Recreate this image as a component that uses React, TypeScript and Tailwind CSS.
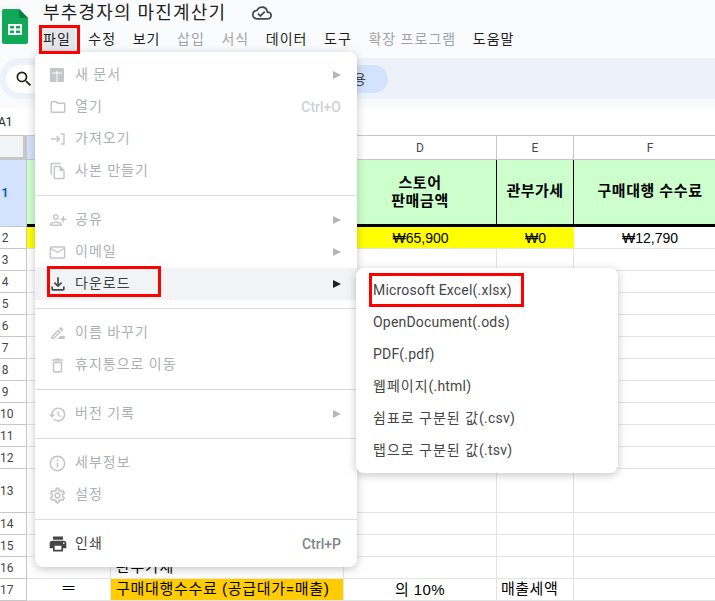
import type { ReactNode } from 'react'
import {
  MdHistory,
  MdInfoOutline,
  MdOutlineCloudDone,
  MdOutlineDeleteOutline,
  MdOutlineDriveFileRenameOutline,
  MdOutlineFileCopy,
  MdOutlineFileDownload,
  MdOutlineFolder,
  MdOutlineMailOutline,
  MdOutlineSettings,
  MdPersonAddAlt,
  MdPrint,
  MdSearch,
} from 'react-icons/md'

const fontClass = "font-['Roboto','Noto_Sans_CJK_KR',sans-serif]"

function SheetsLogo() {
  return (
    <svg width="26" height="35" viewBox="0 0 26 35" className="shrink-0">
      <path d="M2 0h15l9 9v24a2 2 0 0 1-2 2H2a2 2 0 0 1-2-2V2a2 2 0 0 1 2-2z" fill="#0fa958" />
      <path d="M17 0l9 9h-7a2 2 0 0 1-2-2z" fill="#0b7a43" />
      <path d="M6 15h14v11H6zM8 17v2.5h4V17zm6 0v2.5h4V17zm-6 4.5V24h4v-2.5zm6 0V24h4v-2.5z" fill="#fff" fillRule="evenodd" />
    </svg>
  )
}

function NewDocIcon() {
  return (
    <svg width="14" height="14" viewBox="0 0 14 14">
      <rect width="14" height="14" rx="1" fill="#c4c6c8" />
      <path d="M7 3v11M2 5h10" stroke="#fff" strokeWidth="1" fill="none" />
    </svg>
  )
}

function ImportIcon() {
  return (
    <svg width="16" height="16" viewBox="0 0 16 16" fill="none" stroke="#c4c6c8" strokeWidth="1.4">
      <path d="M1 8h8M6.5 5l3 3-3 3M11 3h3v10h-3" />
    </svg>
  )
}

function Arrow({ dark }: { dark?: boolean }) {
  return (
    <span
      className={`h-0 w-0 border-y-[4px] border-l-[8px] border-y-transparent ${dark ? 'border-l-[#202124]' : 'border-l-[#b4b6b8]'}`}
    />
  )
}

type ItemProps = {
  icon?: ReactNode
  label: string
  shortcut?: string
  arrow?: boolean
  active?: boolean
  enabled?: boolean
}

function MenuItem({ icon, label, shortcut, arrow, active, enabled }: ItemProps) {
  return (
    <div className={`flex h-8 items-center pl-[15px] pr-4 ${active ? 'bg-[#f1f3f4]' : ''}`}>
      <span className={`flex w-[25px] shrink-0 items-center ${enabled ? 'text-[#444746]' : 'text-[#c4c6c8]'}`}>{icon}</span>
      <span className={`flex-1 pb-[2px] text-sm tracking-[1px] ${enabled ? 'text-[#3c4043]' : 'text-[#aeb1b4]'}`}>{label}</span>
      {shortcut && <span className={`pb-[1px] text-sm font-medium ${enabled ? 'text-[#80868b]' : 'text-[#cfd1d3]'}`}>{shortcut}</span>}
      {arrow && <Arrow dark={active} />}
    </div>
  )
}

function Divider() {
  return <div className="my-2 h-px bg-[#dadce0]" />
}

function FileMenu() {
  return (
    <div className="absolute left-[35px] top-[52px] z-20 w-[322px] rounded-lg bg-white pt-[7px] pb-[7px] shadow-[0_2px_8px_rgba(60,64,67,0.3)]">
      <MenuItem icon={<NewDocIcon />} label="새 문서" arrow />
      <MenuItem icon={<MdOutlineFolder size={18} className="-ml-px" />} label="열기" shortcut="Ctrl+O" />
      <MenuItem icon={<ImportIcon />} label="가져오기" />
      <MenuItem icon={<MdOutlineFileCopy size={18} className="-ml-px" />} label="사본 만들기" />
      <Divider />
      <MenuItem icon={<MdPersonAddAlt size={18} className="-ml-px" />} label="공유" arrow />
      <MenuItem icon={<MdOutlineMailOutline size={19} className="-ml-[2px]" />} label="이메일" arrow />
      <MenuItem icon={<MdOutlineFileDownload size={20} className="-ml-[2px]" />} label="다운로드" arrow active enabled />
      <Divider />
      <MenuItem icon={<MdOutlineDriveFileRenameOutline size={18} className="-ml-px" />} label="이름 바꾸기" />
      <MenuItem icon={<MdOutlineDeleteOutline size={19} className="-ml-[2px]" />} label="휴지통으로 이동" />
      <Divider />
      <MenuItem icon={<MdHistory size={19} className="-ml-[2px]" />} label="버전 기록" arrow />
      <Divider />
      <MenuItem icon={<MdInfoOutline size={19} className="-ml-[2px]" />} label="세부정보" />
      <MenuItem icon={<MdOutlineSettings size={19} className="-ml-[2px]" />} label="설정" />
      <Divider />
      <MenuItem icon={<MdPrint size={20} className="-ml-[2px]" />} label="인쇄" shortcut="Ctrl+P" enabled />
    </div>
  )
}

function DownloadMenu() {
  const items = [
    { ko: '', en: 'Microsoft Excel(.xlsx)' },
    { ko: '', en: 'OpenDocument(.ods)' },
    { ko: '', en: 'PDF(.pdf)' },
    { ko: '웹페이지', en: '(.html)' },
    { ko: '쉼표로 구분된 값', en: '(.csv)' },
    { ko: '탭으로 구분된 값', en: '(.tsv)' },
  ]
  return (
    <div className="absolute left-[356px] top-[268px] z-30 w-[262px] rounded-lg bg-white pt-[6px] pb-[7px] shadow-[0_2px_8px_rgba(60,64,67,0.3)]">
      {items.map((item) => (
        <div key={item.en} className="flex h-8 items-center pl-[17px] text-sm text-[#444746]">
          {item.ko && <span className="tracking-[1px]">{item.ko}</span>}
          <span className="tracking-[0.2px]">{item.en}</span>
        </div>
      ))}
    </div>
  )
}

const columns = [
  { width: 'w-[84px]', label: '' },
  { width: 'w-[117px]', label: 'B' },
  { width: 'w-[116px]', label: 'C' },
  { width: 'w-[153px]', label: 'D' },
  { width: 'w-[77px]', label: 'E' },
  { width: 'w-[153px]', label: 'F' },
]

const plainRows = [
  { n: 3, h: 'h-[22px]' },
  { n: 4, h: 'h-[22px]' },
  { n: 5, h: 'h-[22px]' },
  { n: 6, h: 'h-[22px]' },
  { n: 7, h: 'h-[22px]' },
  { n: 8, h: 'h-[22px]' },
  { n: 9, h: 'h-[22px]' },
  { n: 10, h: 'h-[22px]' },
  { n: 11, h: 'h-[22px]' },
  { n: 12, h: 'h-[22px]' },
  { n: 13, h: 'h-[44px]' },
  { n: 14, h: 'h-[22px]' },
  { n: 15, h: 'h-[22px]' },
]

// the sheet is cropped on the left, so the row numbers sit near the edge
function RowLabel({ n, selected }: { n: number; selected?: boolean }) {
  return (
    <div
      className={`flex w-[27px] shrink-0 items-center border-r border-b border-[#c7c7c7] text-[12px] ${
        selected ? 'bg-[#d3e3fd] font-bold text-[#0b57d0]' : 'bg-white text-[#444746]'
      }`}
    >
      <span className="w-[10px] text-center">{n}</span>
    </div>
  )
}

function Cell({ className = '', children }: { className?: string; children?: ReactNode }) {
  return (
    <div className={`flex shrink-0 items-center justify-center border-r border-b border-[#e2e3e3] text-sm text-black ${className}`}>
      {children}
    </div>
  )
}

const dataFont = "font-['Liberation_Sans','Noto_Sans_CJK_KR',sans-serif]"

function Grid() {
  return (
    <div className="flex w-[747px] flex-col">
      <div className="flex h-[25px]">
        <div className="w-[27px] shrink-0 border-t border-r-[4px] border-b-[3px] border-[#c7c7c7] bg-[#f1f3f4]" />
        {columns.map((col, i) => (
          <div
            key={col.label + i}
            className={`flex shrink-0 items-center justify-center border-t border-r border-b border-[#c7c7c7] pt-px text-[12px] text-[#444746] ${col.width} ${
              i === 0 ? 'bg-[#d3e3fd]' : 'bg-white'
            }`}
          >
            {col.label}
          </div>
        ))}
      </div>

      <div className="flex h-[67px]">
        <RowLabel n={1} selected />
        <Cell className="w-[84px] border-b-[3px] border-b-black bg-[#ccffcc]" />
        <Cell className="w-[117px] border-b-[3px] border-b-black bg-[#ccffcc]" />
        <Cell className="w-[116px] border-b-[3px] border-b-black bg-[#ccffcc]" />
        <Cell className="w-[153px] border-r-black border-b-[3px] border-b-black bg-[#ccffcc] text-center text-[15px] leading-[18px] font-bold tracking-[0.6px]">
          스토어
          <br />
          판매금액
        </Cell>
        <Cell className="w-[77px] border-r-black border-b-[3px] border-b-black bg-[#ccffcc] text-[15px] font-bold tracking-[0.4px]">관부가세</Cell>
        <Cell className="w-[153px] border-b-[3px] border-b-black bg-[#ccffcc] text-[15px] font-bold tracking-[0.6px]">구매대행 수수료</Cell>
      </div>

      <div className="flex h-[22px]">
        <RowLabel n={2} />
        <Cell className="w-[84px] border-r-0 bg-[#ffff00]" />
        <Cell className="w-[117px] border-r-0 bg-[#ffff00]" />
        <Cell className="w-[116px] border-r-0 bg-[#ffff00]" />
        <Cell className={`w-[153px] border-r-0 bg-[#ffff00] ${dataFont}`}>₩65,900</Cell>
        <Cell className={`w-[77px] border-r-0 bg-[#ffff00] ${dataFont}`}>₩0</Cell>
        <Cell className={`w-[153px] ${dataFont}`}>₩12,790</Cell>
      </div>

      {plainRows.map((row) => (
        <div key={row.n} className={`flex ${row.h}`}>
          <RowLabel n={row.n} />
          {columns.map((col) => (
            <Cell key={col.label + col.width} className={col.width} />
          ))}
        </div>
      ))}

      <div className="flex h-[22px]">
        <RowLabel n={16} />
        <Cell className="w-[84px]" />
        <Cell className="w-[233px] justify-start pl-[5px] text-[15px] tracking-[0.7px]">관부가세</Cell>
        <Cell className="w-[153px]" />
        <Cell className="w-[77px]" />
        <Cell className="w-[153px]" />
      </div>

      <div className="flex h-[22px]">
        <RowLabel n={17} />
        <Cell className="w-[84px] text-[16px]">＝</Cell>
        <Cell className="w-[233px] justify-start bg-[#ffcc00] pl-[5px] text-[15px] tracking-[0.7px]">구매대행수수료 (공급대가=매출)</Cell>
        <Cell className={`w-[153px] text-[15px] tracking-[0.4px] ${dataFont}`}>의 10%</Cell>
        <Cell className="w-[77px] justify-start pl-[4px] text-[15px] tracking-[0.5px]">매출세액</Cell>
        <Cell className="w-[153px]" />
      </div>
    </div>
  )
}

function Header() {
  const menus = [
    { label: '파일', on: true },
    { label: '수정', on: true },
    { label: '보기', on: true },
    { label: '삽입', on: false },
    { label: '서식', on: false },
    { label: '데이터', on: true },
    { label: '도구', on: true },
    { label: '확장 프로그램', on: false },
    { label: '도움말', on: true },
  ]
  return (
    <div className="bg-[#f9fbfd]">
      <div className="flex h-[58px]">
        <div className="pl-[2px] pt-[9px]">
          <SheetsLogo />
        </div>
        <div className="pl-[15px]">
          <div className="flex h-[25px] items-center">
            <span className="text-lg leading-none tracking-[1.2px] text-[#1f1f1f]">부추경자의 마진계산기</span>
            <MdOutlineCloudDone size={20} className="ml-[26px] text-[#444746]" />
          </div>
          <div className="mt-[2px] flex gap-[16.6px]">
            {menus.map((menu, i) => (
              <span
                key={menu.label}
                className={`text-sm leading-[24px] tracking-[1px] ${menu.on ? 'text-[#1f1f1f]' : 'text-[#a0a3a6]'} ${
                  i === 0 ? '-ml-[4px] mr-[-3px] bg-[#e4e6e9] px-[4px]' : ''
                }`}
              >
                {menu.label}
              </span>
            ))}
          </div>
        </div>
      </div>

      <div className="flex h-[41px] items-center rounded-l-[20px] bg-[#edf2fa] pl-[6px]">
        <div className="flex h-7 w-[382px] items-center rounded-full bg-[#d3e3fd]">
          <div className="flex h-7 w-[60px] items-center rounded-l-full bg-white pl-[8px]">
            <MdSearch size={20} className="text-[#1f1f1f]" />
          </div>
          <span className="ml-auto pr-[22px] text-sm text-[#444746]">용</span>
        </div>
      </div>

      <div className="h-[9px]" />
      <div className="flex h-[27px] items-center bg-white text-[12px] text-[#1f1f1f]">
        <span className="-ml-[2px]">A1</span>
      </div>
    </div>
  )
}

export default function App() {
  return (
    <div className={`relative h-[601px] w-[715px] overflow-hidden bg-white ${fontClass}`}>
      <Header />
      <Grid />
      <FileMenu />
      <DownloadMenu />

      {/* red annotation boxes */}
      <div className="absolute left-[39px] top-[25px] z-40 h-[29px] w-[41px] border-[3px] border-[#ff0000]" />
      <div className="absolute left-[47px] top-[266px] z-40 h-[31px] w-[114px] border-[3px] border-[#ff0000]" />
      <div className="absolute left-[369px] top-[273px] z-40 h-[34px] w-[155px] border-[3px] border-[#ff0000]" />
    </div>
  )
}
